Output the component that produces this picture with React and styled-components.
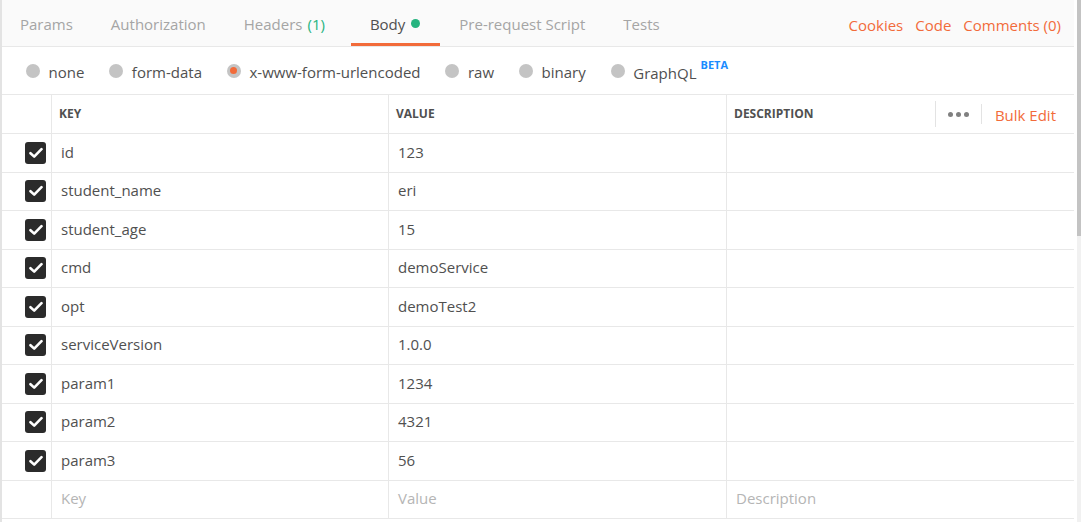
import React from 'react';
import styled, { createGlobalStyle } from 'styled-components';

const GlobalStyle = createGlobalStyle`
  html, body {
    margin: 0;
    padding: 0;
    background: #ffffff;
  }
  body {
    font-family: 'Open Sans', 'Noto Sans', sans-serif;
    color: #505050;
  }
`;

const ORANGE = '#f26b3a';

const Frame = styled.div`
  display: flex;
  width: 1081px;
  height: 522px;
  overflow: hidden;
  border-left: 2px solid #e3e3e3;
  box-sizing: border-box;
`;

const Main = styled.div`
  flex: 1;
  display: flex;
  flex-direction: column;
  min-width: 0;
`;

const Scrollbar = styled.div`
  width: 7px;
  display: flex;
  justify-content: flex-end;
  background: #ffffff;
`;

const Track = styled.div`
  width: 4px;
  height: 100%;
  background: #f1f1f1;
  display: flex;
  flex-direction: column;
`;

const Thumb = styled.div`
  height: 236px;
  background: #c3c3c3;
`;

const TabBar = styled.div`
  display: flex;
  align-items: stretch;
  height: 46px;
  background: #fafafa;
  border-bottom: 1px solid #e8e8e8;
`;

const TabList = styled.div`
  display: flex;
  align-items: stretch;
  margin-left: -1px;
`;

const Tab = styled.div`
  display: flex;
  align-items: center;
  gap: ${(p) => (p.$active ? '6px' : '0')};
  padding: 4px ${(p) => (p.$active ? '20px' : '19px')} 0 19px;
  font-size: 15px;
  color: ${(p) => (p.$active ? '#505050' : '#a5a5a5')};
  border-bottom: 3px solid ${(p) => (p.$active ? ORANGE : 'transparent')};
  box-sizing: border-box;
`;

const Count = styled.span`
  color: #26b47f;
  margin: 0 7px 0 5px;
`;

const Dot = styled.span`
  width: 9px;
  height: 9px;
  border-radius: 50%;
  background: #26b47f;
  display: inline-block;
`;

const Spacer = styled.div`
  flex: 1;
`;

const Links = styled.div`
  display: flex;
  align-items: center;
  gap: 12px;
  padding-right: 13px;
  padding-top: 3px;
`;

const Link = styled.span`
  color: ${ORANGE};
  font-size: 15px;
`;

const ModeRow = styled.div`
  display: flex;
  align-items: center;
  height: 47px;
  padding-left: 24px;
  gap: 25px;
`;

const Mode = styled.label`
  display: flex;
  align-items: center;
  gap: 8.5px;
  font-size: 15px;
  color: #505050;
  padding-top: 2px;
`;

const Radio = styled.span`
  width: 14px;
  height: 14px;
  border-radius: 50%;
  background: #c4c4c4;
  display: flex;
  align-items: center;
  justify-content: center;
  margin-top: -2px;
  &::after {
    content: '';
    width: 7px;
    height: 7px;
    border-radius: 50%;
    background: ${(p) => (p.$checked ? ORANGE : 'transparent')};
  }
`;

const Beta = styled.sup`
  color: #1a8cff;
  font-size: 11px;
  font-weight: 700;
  margin-left: 4px;
  position: relative;
  top: -4px;
`;

const Table = styled.div`
  border-top: 1px solid #e8e8e8;
`;

const Row = styled.div`
  display: grid;
  grid-template-columns: 49px 337px 338px 1fr;
  height: ${(p) => (p.$head ? '39px' : '38.5px')};
  border-bottom: 1px solid #e8e8e8;
  box-sizing: border-box;
`;

const Cell = styled.div`
  display: flex;
  align-items: center;
  padding-left: ${(p) => (p.$head ? '7px' : '9px')};
  padding-bottom: 2px;
  border-left: 1px solid #e8e8e8;
  font-size: ${(p) => (p.$head ? '12px' : '15px')};
  font-weight: ${(p) => (p.$head ? 700 : 400)};
  color: ${(p) => (p.$placeholder ? '#b5b5b5' : '#505050')};
  text-transform: ${(p) => (p.$head ? 'uppercase' : 'none')};
  min-width: 0;
  white-space: nowrap;
`;

const CheckCell = styled.div`
  display: flex;
  align-items: center;
  padding-left: 23px;
`;

const Checkbox = styled.span`
  width: 21px;
  height: 22px;
  border-radius: 3px;
  background: #2b2b2b;
  display: flex;
  align-items: center;
  justify-content: center;
`;

const HeadTools = styled.div`
  margin-left: auto;
  display: flex;
  align-items: center;
  height: 100%;
  padding-top: 2px;
`;

const Divider = styled.span`
  width: 1px;
  height: ${(p) => p.$h}px;
  background: #e3e3e3;
`;

const More = styled.span`
  display: flex;
  gap: 3px;
  padding: 0 12px;
  span {
    width: 5px;
    height: 5px;
    border-radius: 50%;
    background: #808080;
  }
`;

const BulkEdit = styled.span`
  color: ${ORANGE};
  font-size: 15px;
  font-weight: 400;
  text-transform: none;
  padding: 2px 18px 0 13px;
`;

const Check = () => (
  <svg width="14" height="12" viewBox="0 0 14 12">
    <path d="M1.5 6.2 L5.2 9.6 L12.5 2.2" fill="none" stroke="#fff" strokeWidth="2.6" strokeLinecap="round" strokeLinejoin="round" />
  </svg>
);

const params = [
  ['id', '123'],
  ['student_name', 'eri'],
  ['student_age', '15'],
  ['cmd', 'demoService'],
  ['opt', 'demoTest2'],
  ['serviceVersion', '1.0.0'],
  ['param1', '1234'],
  ['param2', '4321'],
  ['param3', '56'],
];

const modes = ['none', 'form-data', 'x-www-form-urlencoded', 'raw', 'binary', 'GraphQL'];

export default function App() {
  return (
    <>
      <GlobalStyle />
      <Frame>
        <Main>
          <TabBar>
            <TabList>
              <Tab>Params</Tab>
              <Tab>Authorization</Tab>
              <Tab>
                Headers<Count>(1)</Count>
              </Tab>
              <Tab $active>
                Body <Dot />
              </Tab>
              <Tab>Pre-request Script</Tab>
              <Tab>Tests</Tab>
            </TabList>
            <Spacer />
            <Links>
              <Link>Cookies</Link>
              <Link>Code</Link>
              <Link>Comments (0)</Link>
            </Links>
          </TabBar>

          <ModeRow>
            {modes.map((m) => (
              <Mode key={m}>
                <Radio $checked={m === 'x-www-form-urlencoded'} />
                <span>
                  {m}
                  {m === 'GraphQL' && <Beta>BETA</Beta>}
                </span>
              </Mode>
            ))}
          </ModeRow>

          <Table>
            <Row $head>
              <CheckCell />
              <Cell $head>Key</Cell>
              <Cell $head>Value</Cell>
              <Cell $head>
                Description
                <HeadTools>
                  <Divider $h={26} />
                  <More>
                    <span />
                    <span />
                    <span />
                  </More>
                  <Divider $h={20} />
                  <BulkEdit>Bulk Edit</BulkEdit>
                </HeadTools>
              </Cell>
            </Row>
            {params.map(([k, v]) => (
              <Row key={k}>
                <CheckCell>
                  <Checkbox>
                    <Check />
                  </Checkbox>
                </CheckCell>
                <Cell>{k}</Cell>
                <Cell>{v}</Cell>
                <Cell />
              </Row>
            ))}
            <Row>
              <CheckCell />
              <Cell $placeholder>Key</Cell>
              <Cell $placeholder>Value</Cell>
              <Cell $placeholder>Description</Cell>
            </Row>
          </Table>
        </Main>
        <Scrollbar>
          <Track>
            <Thumb />
          </Track>
        </Scrollbar>
      </Frame>
    </>
  );
}
